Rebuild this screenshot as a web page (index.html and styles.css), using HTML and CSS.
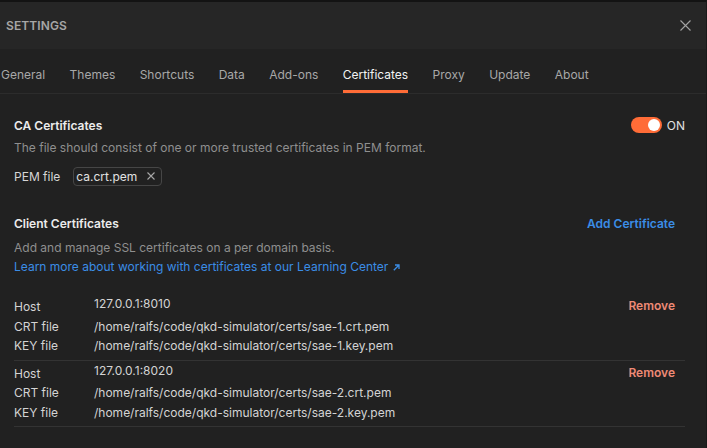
FILE: index.html
```html
<!DOCTYPE html>
<html>
<head>
<meta charset="utf-8">
<link rel="stylesheet" href="styles.css">
</head>
<body>
<div class="modal">
  <header class="header">
    <span class="title">SETTINGS</span>
    <svg class="close" width="11" height="11" viewBox="0 0 11 11"><path d="M0.5 0.5L10.5 10.5M10.5 0.5L0.5 10.5" stroke="#a3a3a3" stroke-width="1.1" fill="none"/></svg>
  </header>
  <nav class="tabs">
    <span class="tab">General</span>
    <span class="tab">Themes</span>
    <span class="tab">Shortcuts</span>
    <span class="tab">Data</span>
    <span class="tab">Add-ons</span>
    <span class="tab active">Certificates</span>
    <span class="tab">Proxy</span>
    <span class="tab">Update</span>
    <span class="tab">About</span>
  </nav>
  <main class="content">
    <section class="section">
      <div class="section-head">
        <span class="section-title">CA Certificates</span>
        <span class="toggle-wrap"><span class="toggle"><span class="knob"></span></span><span class="toggle-label">ON</span></span>
      </div>
      <p class="desc desc-ca">The file should consist of one or more trusted certificates in PEM format.</p>
      <div class="pem-row">
        <span class="pem-label">PEM file</span>
        <span class="chip">ca.crt.pem<svg class="chip-x" width="8" height="8" viewBox="0 0 8 8"><path d="M0.5 0.5L7.5 7.5M7.5 0.5L0.5 7.5" stroke="#a8a8a8" stroke-width="1.1" fill="none"/></svg></span>
      </div>
    </section>
    <section class="section client">
      <div class="section-head">
        <span class="section-title">Client Certificates</span>
        <span class="add">Add Certificate</span>
      </div>
      <p class="desc desc-client">Add and manage SSL certificates on a per domain basis.</p>
      <p class="link">Learn more about working with certificates at our Learning Center <svg class="arrow" width="7" height="7" viewBox="0 0 7 7"><path d="M0.8 6.2L6 1M2 1H6V5" stroke="#3b8de6" stroke-width="1.3" fill="none"/></svg></p>
      <div class="certs">
        <div class="cert">
          <span class="lbl lbl-host">Host</span><span class="val">127.0.0.1:8010</span><span class="remove">Remove</span>
          <span class="lbl">CRT file</span><span class="val">/home/ralfs/code/qkd-simulator/certs/sae-1.crt.pem</span><span></span>
          <span class="lbl">KEY file</span><span class="val">/home/ralfs/code/qkd-simulator/certs/sae-1.key.pem</span><span></span>
        </div>
        <div class="cert">
          <span class="lbl lbl-host">Host</span><span class="val">127.0.0.1:8020</span><span class="remove">Remove</span>
          <span class="lbl">CRT file</span><span class="val">/home/ralfs/code/qkd-simulator/certs/sae-2.crt.pem</span><span></span>
          <span class="lbl">KEY file</span><span class="val">/home/ralfs/code/qkd-simulator/certs/sae-2.key.pem</span><span></span>
        </div>
      </div>
    </section>
  </main>
</div>
</body>
</html>
```

FILE: styles.css
```css
* { box-sizing: border-box; }
html, body {
  margin: 0;
  padding: 0;
  background: #212121;
  font-family: Inter, "Noto Sans", sans-serif;
  color: #d4d4d4;
}
.modal {
  width: 707px;
  height: 448px;
  background: #212121;
  border-top: 2px solid #131313;
  border-right: 1px solid #1a1a1a;
  overflow: hidden;
}
.header {
  height: 47px;
  background: #262626;
  display: flex;
  align-items: center;
  justify-content: space-between;
  padding: 0 15px 0 6px;
}
.title {
  font-size: 12px;
  font-weight: 600;
  color: #a6a6a6;
  letter-spacing: 0.1px;
}
.close { display: block; }
.tabs {
  height: 45px;
  display: flex;
  align-items: flex-end;
  gap: 24.4px;
  padding-left: 1px;
  border-bottom: 1px solid #2c2c2c;
}
.tab {
  font-size: 12px;
  color: #a8a8a8;
  line-height: 20px;
  padding-bottom: 5px;
  border-bottom: 3px solid transparent;
}
.tab.active {
  color: #f2f2f2;
  border-bottom-color: #ff6c37;
}
.content {
  padding: 21px 21px 0 14px;
}
.section-head {
  display: flex;
  justify-content: space-between;
  align-items: center;
  height: 20px;
}
.section-title {
  font-size: 12px;
  font-weight: 600;
  color: #ececec;
}
.toggle-wrap {
  display: flex;
  align-items: center;
  gap: 5px;
}
.toggle {
  width: 31px;
  height: 16px;
  border-radius: 8px;
  background: #ff6c37;
  display: flex;
  align-items: center;
  justify-content: flex-end;
  padding-right: 2px;
}
.knob {
  width: 12px;
  height: 12px;
  border-radius: 50%;
  background: #ffffff;
}
.toggle-label {
  font-size: 12px;
  color: #e0e0e0;
}
.desc {
  margin: 3px 0 0;
  font-size: 12px;
  line-height: 20px;
  color: #8f8f8f;
}
.pem-row {
  margin-top: 8px;
  display: flex;
  align-items: center;
  gap: 13px;
  height: 20px;
}
.pem-label {
  font-size: 12px;
  color: #d6d6d6;
}
.chip {
  display: flex;
  align-items: center;
  gap: 10px;
  height: 19px;
  padding: 0 6px 0 2px;
  border: 1px solid #464646;
  border-radius: 4px;
  font-size: 12px;
  color: #e2e2e2;
}
.chip-x { display: block; }
.client { margin-top: 27px; }
.add {
  font-size: 12px;
  font-weight: 600;
  color: #3b8de6;
  margin-right: 10px;
}
.desc-client {
  margin-top: 5px;
  line-height: 19px;
}
.link {
  margin: 0;
  font-size: 12px;
  line-height: 19px;
  color: #3b8de6;
}
.arrow { vertical-align: 0px; margin-left: 1px; }
.certs { margin-top: 17px; }
.cert {
  display: grid;
  grid-template-columns: 80px 1fr auto;
  padding: 1px 0 4px;
  border-bottom: 1px solid #333333;
  font-size: 12px;
  line-height: 19.5px;
}
.cert + .cert { padding-top: 0; }
.lbl { color: #d4d4d4; }
.lbl-host { padding-top: 3px; }
.val { color: #d4d4d4; }
.remove {
  color: #ee8a76;
  font-weight: 600;
  padding-top: 2px;
  margin-right: 10px;
}
```
